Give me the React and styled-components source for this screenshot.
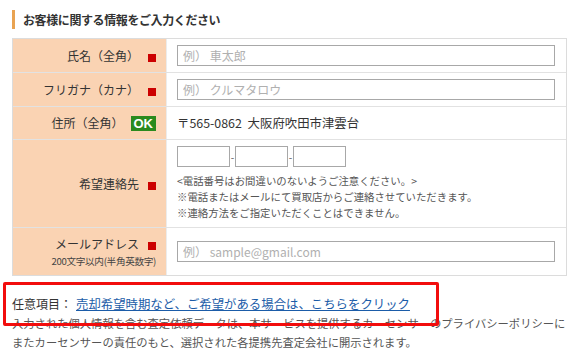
import React from "react";
import styled, { createGlobalStyle } from "styled-components";

const Global = createGlobalStyle`
  html, body { margin: 0; padding: 0; background: #fff; overflow: hidden; }
  body {
    font-family: "Noto Sans CJK JP", "Noto Sans", sans-serif;
    color: #333;
    width: 575px;
    height: 364px;
  }
  * { box-sizing: border-box; }
`;

const Page = styled.div`
  padding: 10px 0 0 12px;
  width: 567px;
`;

const Heading = styled.h2`
  margin: 0 0 9px 0;
  height: 19px;
  display: flex;
  align-items: center;
  border-left: 3px solid #e9a352;
  padding-left: 8px;
  font-size: 12px;
  font-weight: 700;
  letter-spacing: -0.4px;
  color: #333;
`;

const Table = styled.div`
  border: 1px solid #dcdcdc;
  width: 555px;
`;

const Row = styled.div`
  display: grid;
  grid-template-columns: 154px 1fr;
  height: ${(p) => p.$h}px;
  border-top: ${(p) => (p.$first ? "none" : "1px solid #e2e2e2")};
`;

const Label = styled.div`
  background: #fad3b3;
  border-right: 1px solid #ececec;
  display: flex;
  flex-direction: column;
  align-items: flex-end;
  justify-content: center;
  padding-right: 10px;
`;

const LabelLine = styled.div`
  display: flex;
  align-items: center;
  gap: 9px;
  font-size: 12px;
  color: #333;
  line-height: 16px;
`;

const SubLabel = styled.div`
  font-size: 9.6px;
  color: #444;
  line-height: 14px;
  margin-top: 2px;
  letter-spacing: -0.3px;
`;

const Req = styled.span`
  display: inline-block;
  width: 8px;
  height: 8px;
  background: #cc0000;
  margin-top: 4px;
`;

const Ok = styled.span`
  display: inline-block;
  background: #2a8a1e;
  color: #fff;
  font-family: "Liberation Sans", Arial, sans-serif;
  font-weight: 700;
  font-size: 13px;
  line-height: 15px;
  padding: 0 3px;
  margin-left: -2px;
`;

const Value = styled.div`
  display: flex;
  flex-direction: column;
  justify-content: ${(p) => (p.$top ? "flex-start" : "center")};
  padding: ${(p) => (p.$top ? "6px 0 0 10px" : "0 0 0 10px")};
  background: #fff;
`;

const TextInput = styled.input`
  width: ${(p) => p.$w || 378}px;
  height: 21px;
  border: 1px solid #a8a8a8;
  padding: 0 0 0 5px;
  font-family: "Noto Sans CJK JP", sans-serif;
  font-size: 12px;
  color: #333;
  outline: none;
  &::placeholder { color: #b0b0b0; }
`;

const Address = styled.div`
  font-size: 12.4px;
  color: #333;
  word-spacing: 3px;
`;

const PhoneRow = styled.div`
  display: flex;
  align-items: center;
`;

const Dash = styled.span`
  font-size: 10px;
  color: #555;
  width: 5px;
  text-align: center;
  line-height: 21px;
`;

const Notes = styled.div`
  margin-top: 6px;
  font-size: 10.4px;
  line-height: 16px;
  color: #555;
  white-space: nowrap;
`;

const Footer = styled.div`
  position: relative;
  padding-top: 20px;
`;

const Optional = styled.div`
  font-size: 12px;
  line-height: 16px;
  color: #333;
  white-space: nowrap;
`;

const Link = styled.a`
  color: #1b5ca8;
  text-decoration: underline;
  font-size: 12.4px;
  margin-left: 4px;
`;

const Disclaimer = styled.p`
  margin: 2px 0 0 0;
  font-size: 11.3px;
  line-height: 19px;
  color: #555;
  white-space: nowrap;
`;

const Highlight = styled.div`
  position: absolute;
  left: -9px;
  top: 6px;
  width: 436px;
  height: 44px;
  border: 3px solid #f20d0d;
  border-radius: 2px;
  pointer-events: none;
`;

export default function App() {
  return (
    <>
      <Global />
      <Page>
        <Heading>お客様に関する情報をご入力ください</Heading>
        <Table>
          <Row $first $h={33}>
            <Label>
              <LabelLine>
                氏名（全角）<Req />
              </LabelLine>
            </Label>
            <Value>
              <TextInput placeholder="例） 車太郎" />
            </Value>
          </Row>
          <Row $h={34}>
            <Label>
              <LabelLine>
                フリガナ（カナ）<Req />
              </LabelLine>
            </Label>
            <Value>
              <TextInput placeholder="例） クルマタロウ" />
            </Value>
          </Row>
          <Row $h={33}>
            <Label>
              <LabelLine>
                住所（全角）<Ok>OK</Ok>
              </LabelLine>
            </Label>
            <Value>
              <Address>〒565-0862 大阪府吹田市津雲台</Address>
            </Value>
          </Row>
          <Row $h={88}>
            <Label>
              <LabelLine>
                希望連絡先<Req />
              </LabelLine>
            </Label>
            <Value $top>
              <PhoneRow>
                <TextInput $w={53} />
                <Dash>-</Dash>
                <TextInput $w={53} />
                <Dash>-</Dash>
                <TextInput $w={53} />
              </PhoneRow>
              <Notes>
                &lt;電話番号はお間違いのないようご注意ください。&gt;
                <br />
                ※電話またはメールにて買取店からご連絡させていただきます。
                <br />
                ※連絡方法をご指定いただくことはできません。
              </Notes>
            </Value>
          </Row>
          <Row $h={48}>
            <Label>
              <LabelLine>
                メールアドレス<Req />
              </LabelLine>
              <SubLabel>200文字以内(半角英数字)</SubLabel>
            </Label>
            <Value>
              <TextInput placeholder="例） sample@gmail.com" />
            </Value>
          </Row>
        </Table>
        <Footer>
          <Optional>
            任意項目：
            <Link href="#">売却希望時期など、ご希望がある場合は、こちらをクリック</Link>
          </Optional>
          <Disclaimer>
            入力された個人情報を含む査定依頼データは、本サービスを提供するカーセンサーのプライバシーポリシーに
            <br />
            またカーセンサーの責任のもと、選択された各提携先査定会社に開示されます。
          </Disclaimer>
          <Highlight />
        </Footer>
      </Page>
    </>
  );
}
